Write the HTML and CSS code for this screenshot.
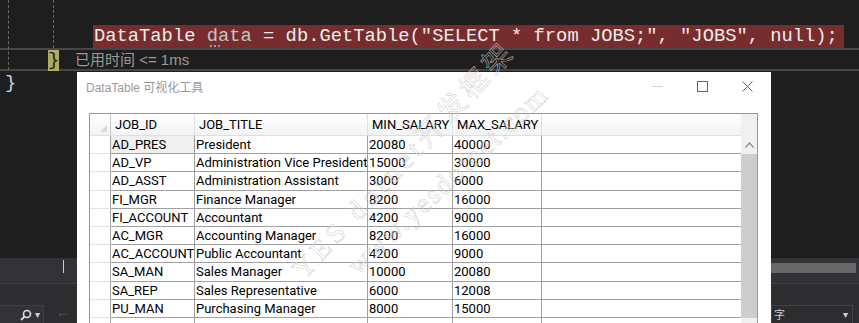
FILE: index.html
```html
<!DOCTYPE html>
<html lang="zh-CN">
<head>
  <meta charset="UTF-8">
  <title>DataTable 可视化工具</title>
  <link rel="stylesheet" href="styles.css">
</head>
<body>
  <div class="ide">
    <div class="editor">
      <div class="guide guide-1"></div>
      <div class="guide guide-2"></div>
      <div class="code-line"><span class="hl">DataTable <span class="var">data</span> = db.GetTable("SELECT * from JOBS;", "JOBS", null);</span></div>
      <div class="current-line">
        <span class="brace">}</span>
        <span class="elapsed">已用时间 &lt;= 1ms</span>
      </div>
      <div class="code-line plain">}</div>
    </div>
    <div class="hscroll"><span class="caret"></span><span class="hthumb"></span></div>
    <div class="grip"><div class="dots"></div></div>
    <div class="toolbar">
      <div class="search">
        <svg width="12" height="12" viewBox="0 0 12 12"><circle cx="7" cy="5" r="3.5" fill="none" stroke="#e0e0e0" stroke-width="1.6"/><line x1="4.4" y1="7.6" x2="1" y2="11" stroke="#e0e0e0" stroke-width="1.8"/></svg>
        <span class="drop">▾</span>
      </div>
      <span class="back">←</span>
      <div class="combo"><span class="combo-text">字</span><span class="drop">▾</span></div>
    </div>
  </div>

  <div class="dialog">
    <div class="titlebar">
      <span class="title">DataTable 可视化工具</span>
      <span class="win-btn">
        <svg width="11" height="11" viewBox="0 0 11 11"><line x1="0" y1="5.5" x2="11" y2="5.5" stroke="#d0d0d0" stroke-width="1"/></svg>
      </span>
      <span class="win-btn">
        <svg width="11" height="11" viewBox="0 0 11 11"><rect x="0.5" y="0.5" width="10" height="10" fill="none" stroke="#666" stroke-width="1"/></svg>
      </span>
      <span class="win-btn">
        <svg width="11" height="11" viewBox="0 0 11 11"><path d="M0.5 0.5 L10.5 10.5 M10.5 0.5 L0.5 10.5" stroke="#666" stroke-width="1"/></svg>
      </span>
    </div>

    <div class="grid">
      <div class="sheet">
        <div class="row head">
          <div class="cell rh corner"></div>
          <div class="cell">JOB_ID</div>
          <div class="cell">JOB_TITLE</div>
          <div class="cell">MIN_SALARY</div>
          <div class="cell">MAX_SALARY</div>
          <div class="cell tail"></div>
        </div>
        <div class="row"><div class="cell rh"></div><div class="cell current">AD_PRES</div><div class="cell">President</div><div class="cell">20080</div><div class="cell">40000</div><div class="cell tail"></div></div>
        <div class="row"><div class="cell rh"></div><div class="cell">AD_VP</div><div class="cell">Administration Vice President</div><div class="cell">15000</div><div class="cell">30000</div><div class="cell tail"></div></div>
        <div class="row"><div class="cell rh"></div><div class="cell">AD_ASST</div><div class="cell">Administration Assistant</div><div class="cell">3000</div><div class="cell">6000</div><div class="cell tail"></div></div>
        <div class="row"><div class="cell rh"></div><div class="cell">FI_MGR</div><div class="cell">Finance Manager</div><div class="cell">8200</div><div class="cell">16000</div><div class="cell tail"></div></div>
        <div class="row"><div class="cell rh"></div><div class="cell">FI_ACCOUNT</div><div class="cell">Accountant</div><div class="cell">4200</div><div class="cell">9000</div><div class="cell tail"></div></div>
        <div class="row"><div class="cell rh"></div><div class="cell">AC_MGR</div><div class="cell">Accounting Manager</div><div class="cell">8200</div><div class="cell">16000</div><div class="cell tail"></div></div>
        <div class="row"><div class="cell rh"></div><div class="cell">AC_ACCOUNT</div><div class="cell">Public Accountant</div><div class="cell">4200</div><div class="cell">9000</div><div class="cell tail"></div></div>
        <div class="row"><div class="cell rh"></div><div class="cell">SA_MAN</div><div class="cell">Sales Manager</div><div class="cell">10000</div><div class="cell">20080</div><div class="cell tail"></div></div>
        <div class="row"><div class="cell rh"></div><div class="cell">SA_REP</div><div class="cell">Sales Representative</div><div class="cell">6000</div><div class="cell">12008</div><div class="cell tail"></div></div>
        <div class="row"><div class="cell rh"></div><div class="cell">PU_MAN</div><div class="cell">Purchasing Manager</div><div class="cell">8000</div><div class="cell">15000</div><div class="cell tail"></div></div>
        <div class="row"><div class="cell rh"></div><div class="cell"></div><div class="cell"></div><div class="cell"></div><div class="cell"></div><div class="cell tail"></div></div>
      </div>
      <div class="vscroll">
        <div class="up">
          <svg width="9" height="6" viewBox="0 0 9 6"><path d="M0.5 5.5 L4.5 1 L8.5 5.5" fill="none" stroke="#8a8a8a" stroke-width="1.2"/></svg>
        </div>
        <div class="thumb"></div>
      </div>
    </div>
  </div>

  <span class="watermark wm-1">YES dotnet开发框架</span>
  <span class="watermark wm-2">www.yesdotnet.com</span>
</body>
</html>
```

FILE: styles.css
```css
* {
  box-sizing: border-box;
}
body {
  margin: 0;
  width: 859px;
  height: 323px;
  overflow: hidden;
  position: relative;
  background: #1e1e1e;
  font-family: "Liberation Sans", "Noto Sans CJK SC", sans-serif;
}
.ide {
  height: 323px;
  display: flex;
  flex-direction: column;
}

/* editor */
.editor {
  height: 258px;
  position: relative;
  padding-top: 25px;
  font-family: "Liberation Mono", monospace;
  font-size: 18.8px;
  color: #dcdcdc;
}
.guide {
  position: absolute;
  top: 0;
  width: 0;
  border-left: 1px dashed #6a6a6a;
}
.guide-1 { left: 8px; height: 70px; }
.guide-2 { left: 53px; height: 48px; }
.code-line {
  height: 23px;
  line-height: 23px;
  padding-left: 93px;
  white-space: pre;
}
.code-line.plain {
  padding-left: 5px;
  line-height: 24px;
  color: #c8d4e0;
}
.hl {
  display: inline-block;
  background: #772d2d;
  padding: 0 6px 0 1px;
  color: #ececec;
}
.var {
  position: relative;
  color: #c4c4c4;
}
.var::after {
  content: "";
  position: absolute;
  left: 3px;
  bottom: 0;
  width: 10px;
  border-bottom: 2px dotted #9a9a9a;
}
.current-line {
  height: 23px;
  border-top: 2px solid #464646;
  border-bottom: 2px solid #464646;
  display: flex;
  align-items: flex-start;
}
.brace {
  margin-left: 48px;
  width: 11px;
  height: 21px;
  line-height: 21px;
  text-align: center;
  background: #adac62;
  color: #1e1e1e;
}
.elapsed {
  margin-left: 16px;
  font-family: "Liberation Sans", "Noto Sans CJK SC", sans-serif;
  font-size: 15px;
  line-height: 19px;
  color: #9a9a9a;
}

/* bottom chrome */
.hscroll {
  height: 25px;
  background: #333337;
  position: relative;
}
.caret {
  position: absolute;
  left: 63px;
  top: 2px;
  width: 1px;
  height: 13px;
  background: #cfcfcf;
}
.hthumb {
  position: absolute;
  left: 400px;
  right: 3px;
  top: 5px;
  height: 10px;
  background: #686868;
}
.grip {
  height: 22px;
  background: #2d2d30;
  border-top: 1px solid #3f3f46;
}
.dots {
  margin-top: 12px;
  height: 2px;
  background-image: radial-gradient(#4f4f55 0.8px, transparent 1px);
  background-size: 4px 2px;
}
.toolbar {
  height: 18px;
  background: #2d2d30;
  display: flex;
  align-items: flex-start;
}
.search {
  width: 44px;
  height: 18px;
  background: #333337;
  border: 1px solid #3f3f46;
  border-left: none;
  border-bottom: none;
  display: flex;
  align-items: center;
  gap: 3px;
  padding-left: 20px;
}
.drop {
  font-size: 10px;
  line-height: 14px;
  color: #d0d0d0;
}
.back {
  margin-left: 12px;
  font-size: 13px;
  line-height: 16px;
  color: #5c5c5c;
}
.combo {
  margin-left: auto;
  margin-right: 6px;
  width: 82px;
  height: 18px;
  border: 1px solid #434346;
  border-bottom: none;
  display: flex;
  justify-content: space-between;
  align-items: center;
  padding: 0 4px 0 2px;
  color: #d0d0d0;
}
.combo-text {
  font-size: 11px;
  line-height: 14px;
}

/* dialog */
.dialog {
  position: absolute;
  left: 77px;
  top: 72px;
  width: 694px;
  height: 260px;
  background: #fff;
  display: flex;
  flex-direction: column;
}
.titlebar {
  height: 28px;
  display: flex;
  align-items: center;
  padding-left: 9px;
}
.title {
  flex: 1;
  font-size: 12px;
  color: #9a9a9a;
}
.win-btn {
  width: 45px;
  height: 28px;
  display: flex;
  align-items: center;
  justify-content: center;
}
.win-btn:last-child {
  margin-right: 1px;
}
.grid {
  flex: 1;
  margin: 13px 13px 0 12px;
  border: 1px solid #7c9bc2;
  border-bottom: none;
  display: flex;
  overflow: hidden;
}
.sheet {
  flex: 1;
}
.row {
  display: grid;
  grid-template-columns: 21px 84px 173px 85px 89px 1fr;
  height: 18.2px;
  font-family: Roboto, "Liberation Sans", sans-serif;
  font-size: 13px;
  color: #000;
}
.cell {
  border-right: 1px solid #a0a0a0;
  border-bottom: 1px solid #a0a0a0;
  padding: 1px 0 0 1px;
  line-height: 16px;
  white-space: nowrap;
  overflow: hidden;
}
.cell.tail {
  border-right: none;
}
.cell.rh {
  border-bottom-color: #e4e4e4;
}
.cell.current {
  background: #f0f0f0;
}
.row.head {
  height: 22px;
  background: linear-gradient(#ffffff, #f1f2f4);
}
.row.head .cell {
  border-right-color: #dcdfe4;
  border-bottom-color: #dcdfe4;
  padding: 0 0 0 4px;
  line-height: 22px;
}
.row.head .cell.rh {
  border-right-color: #c9c9c9;
}
.corner {
  position: relative;
}
.corner::after {
  content: "";
  position: absolute;
  right: 3px;
  bottom: 3px;
  border-left: 7px solid transparent;
  border-bottom: 7px solid #dadada;
}
.vscroll {
  width: 16px;
  background: #f0f0f0;
  padding-top: 22px;
}
.up {
  height: 18px;
  display: flex;
  align-items: center;
  justify-content: center;
}
.thumb {
  height: 164px;
  background: #cdcdcd;
}

/* watermark */
.watermark {
  position: absolute;
  font-family: "Liberation Serif", "Noto Sans CJK SC", serif;
  color: transparent;
  -webkit-text-stroke: 0.5px #cccccc;
  white-space: nowrap;
  pointer-events: none;
}
.wm-1 {
  left: 402px;
  top: 158px;
  font-size: 28px;
  letter-spacing: 5px;
  transform: translate(-50%, -50%) rotate(-47deg);
}
.wm-2 {
  left: 448px;
  top: 180px;
  font-size: 28px;
  letter-spacing: 2px;
  transform: translate(-50%, -50%) rotate(-43deg);
}
```
